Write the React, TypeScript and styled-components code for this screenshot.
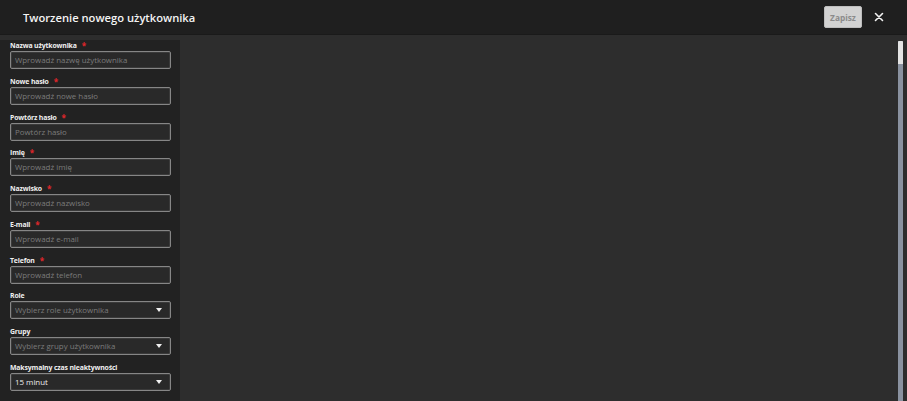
import React from "react";
import styled, { createGlobalStyle } from "styled-components";

const Global = createGlobalStyle`
  html, body { margin: 0; padding: 0; background: #2d2d2d; overflow: hidden; }
  body { font-family: "Open Sans", "Noto Sans", sans-serif; }
  * { box-sizing: border-box; }
`;

const Page = styled.div`
  width: 907px;
  height: 401px;
  display: flex;
  flex-direction: column;
  background: #2d2d2d;
  overflow: hidden;
`;

const Header = styled.header`
  height: 35px;
  flex: none;
  display: flex;
  align-items: center;
  padding: 0 23px 0 23px;
  background: #1f1f1f;
  border-bottom: 1px solid #1a1a1a;
`;

const Title = styled.h1`
  margin: 0;
  flex: 1;
  font-size: 11.2px;
  font-weight: 600;
  color: #f4f4f4;
`;

const SaveButton = styled.button`
  width: 38px;
  height: 22px;
  padding: 0;
  border: 1px solid #bdbdbd;
  border-radius: 2px;
  background: #d2d2d2;
  color: #8b8b8b;
  font-family: "Open Sans", sans-serif;
  font-size: 8.3px;
  font-weight: 700;
  margin-right: 12px;
`;

const CloseButton = styled.button`
  width: 10px;
  height: 10px;
  padding: 0;
  border: 0;
  background: transparent;
  display: flex;
  align-items: center;
  justify-content: center;
`;

const Body = styled.div`
  flex: 1;
  display: flex;
  padding-top: 5px;
  min-height: 0;
`;

const Panel = styled.div`
  width: 180px;
  flex: none;
  background: #222222;
  padding: 1px 9px 0 10px;
  display: flex;
  flex-direction: column;
  gap: 7.75px;
`;

const Canvas = styled.div`
  flex: 1;
  position: relative;
`;

const ScrollTrack = styled.div`
  position: absolute;
  right: 4px;
  top: 1px;
  bottom: 0;
  width: 5px;
  background: #8a92a0;
  border-radius: 1px 1px 0 0;
`;

const ScrollThumb = styled.div`
  height: 23px;
  background: #e4e4e4;
  border-radius: 1px 1px 0 0;
`;

const Field = styled.div`
  display: flex;
  flex-direction: column;
  gap: 1px;
`;

const Label = styled.label`
  height: 9px;
  line-height: 9px;
  font-size: 6.9px;
  font-weight: 700;
  letter-spacing: -0.15px;
  color: #f0f0f0;
  display: flex;
  gap: 5px;
`;

const Req = styled.span`
  color: #e0262b;
  font-size: 8px;
`;

const Box = styled.div<{ $value?: boolean }>`
  height: 18px;
  border: 1px solid #868686;
  border-radius: 2px;
  background: #292929;
  box-shadow: inset 0 0 0 1px #3a3a3a;
  display: flex;
  align-items: center;
  padding: 0 6px 0 4px;
  font-size: 7.9px;
  color: ${(p) => (p.$value ? "#ececec" : "#7b7b7b")};
  white-space: nowrap;
`;

const Text = styled.span`
  flex: 1;
`;

const Caret = styled.svg`
  width: 6px;
  height: 4px;
  margin-right: 2px;
`;

type F = { label: string; ph: string; req?: boolean; select?: boolean; value?: boolean };

const fields: F[] = [
  { label: "Nazwa użytkownika", ph: "Wprowadź nazwę użytkownika", req: true },
  { label: "Nowe hasło", ph: "Wprowadź nowe hasło", req: true },
  { label: "Powtórz hasło", ph: "Powtórz hasło", req: true },
  { label: "Imię", ph: "Wprowadź imię", req: true },
  { label: "Nazwisko", ph: "Wprowadź nazwisko", req: true },
  { label: "E-mail", ph: "Wprowadź e-mail", req: true },
  { label: "Telefon", ph: "Wprowadź telefon", req: true },
  { label: "Role", ph: "Wybierz role użytkownika", select: true },
  { label: "Grupy", ph: "Wybierz grupy użytkownika", select: true },
  { label: "Maksymalny czas nieaktywności", ph: "15 minut", select: true, value: true },
];

export default function App() {
  return (
    <Page>
      <Global />
      <Header>
        <Title>Tworzenie nowego użytkownika</Title>
        <SaveButton>Zapisz</SaveButton>
        <CloseButton aria-label="close">
          <svg width="10" height="10" viewBox="0 0 10 10">
            <path d="M1.5 1.5L8.5 8.5M8.5 1.5L1.5 8.5" stroke="#f2f2f2" strokeWidth="1.6" strokeLinecap="round" />
          </svg>
        </CloseButton>
      </Header>
      <Body>
        <Panel>
          {fields.map((f) => (
            <Field key={f.label}>
              <Label>
                {f.label}
                {f.req && <Req>*</Req>}
              </Label>
              <Box $value={f.value}>
                <Text>{f.ph}</Text>
                {f.select && (
                  <Caret viewBox="0 0 6 4">
                    <path d="M0 0H6L3 4Z" fill="#f0f0f0" />
                  </Caret>
                )}
              </Box>
            </Field>
          ))}
        </Panel>
        <Canvas>
          <ScrollTrack>
            <ScrollThumb />
          </ScrollTrack>
        </Canvas>
      </Body>
    </Page>
  );
}
